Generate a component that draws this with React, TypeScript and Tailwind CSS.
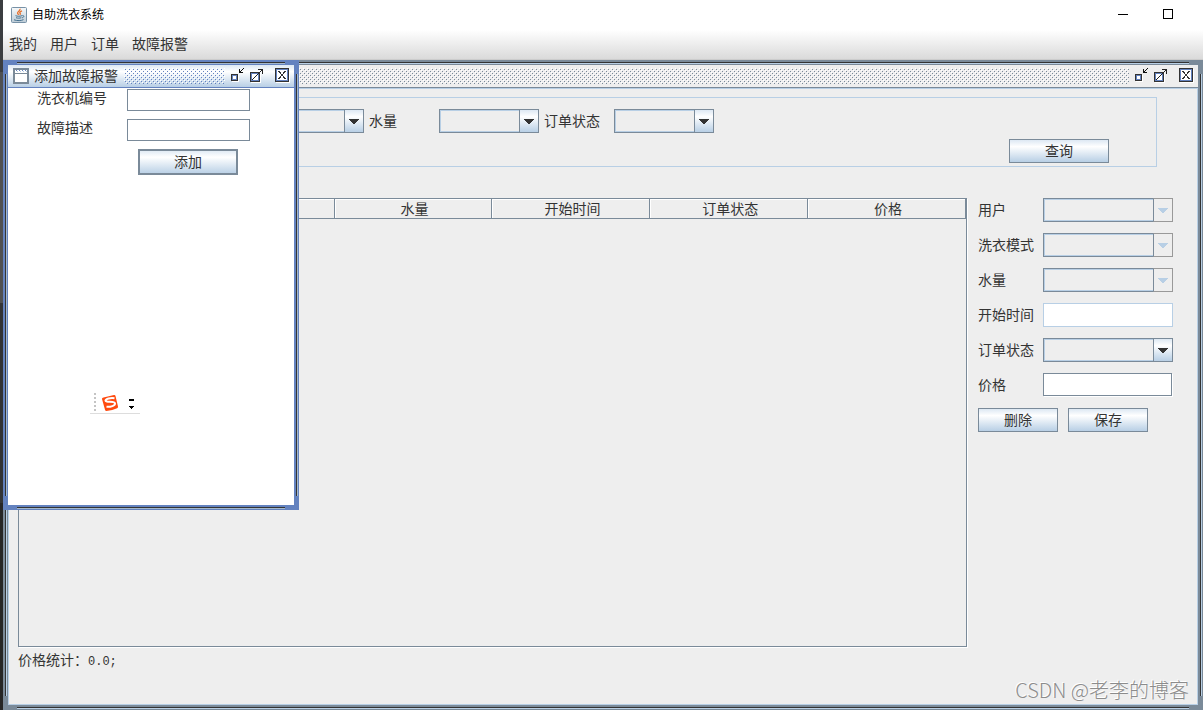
import React from 'react';

const MENUS = ['我的', '用户', '订单', '故障报警'];
const COLUMNS = ['', '', '水量', '开始时间', '订单状态', '价格'];

const BUTTON =
  'border border-[#7a8a99] bg-linear-to-b from-[#dde8f3] via-white via-30% to-[#b8cfe5] text-[14px] leading-5 text-[#333333]';

type FrameProps = {
  active?: boolean;
  title?: string;
  className: string;
  children: React.ReactNode;
};

function FrameEdge({ active, vertical }: { active?: boolean; vertical?: boolean }) {
  const tone = active ? 'bg-[#6382bf]' : 'bg-[#7a8a99]';
  const light = active ? 'bg-[#a3b8cc]' : 'bg-[#b8cfe5]';
  return vertical ? (
    <div className={`flex w-[5px] shrink-0 py-[9px] pl-[2px] ${tone}`}>
      <div className="w-px bg-[#333333]" />
      <div className={`w-px ${light}`} />
    </div>
  ) : (
    <div className={`h-[5px] shrink-0 px-[14px] pt-[2px] ${tone}`}>
      <div className="h-px bg-[#333333]" />
      <div className={`h-px ${light}`} />
    </div>
  );
}

function IconifyIcon() {
  return (
    <svg width="16" height="16" viewBox="0 0 16 16" shapeRendering="crispEdges">
      <path d="M3 13.5h6.5V7" fill="none" stroke="#fff" />
      <rect x="2" y="6" width="7" height="7" fill="#333" />
      <rect x="3" y="7" width="5" height="5" fill="#6382bf" />
      <rect x="4" y="8" width="3" height="3" fill="#333" />
      <rect x="4" y="8" width="3" height="3" fill="#fff" />
      <path d="M10 1h1v3h3v1h-4zM11 3h1v1h-1zM12 2h1v1h-1zM13 1h1v1h-1zM14 0h1v1h-1z" fill="#111" />
    </svg>
  );
}

function MaximizeIcon() {
  return (
    <svg width="16" height="16" viewBox="0 0 16 16" shapeRendering="crispEdges">
      <path d="M2 14.5h9.5V5" fill="none" stroke="#fff" />
      <rect x="1.5" y="4.5" width="9" height="9" fill="#6382bf" stroke="#333" />
      <rect x="3" y="6" width="6" height="6" fill="#fff" />
      <path d="M3 11h1v1h-1zM4 10h1v1h-1zM5 9h1v1h-1zM6 8h1v1h-1zM7 7h1v1h-1zM8 6h1v1h-1zM9 5h1v1h-1zM10 4h1v1h-1zM11 3h1v1h-1zM12 2h1v1h-1z" fill="#222" />
      <path d="M9 1h5v5h-1V2H9z" fill="#222" />
    </svg>
  );
}

function CloseIcon() {
  return (
    <svg width="16" height="16" viewBox="0 0 16 16" shapeRendering="crispEdges">
      <path d="M2 14.5h13.5V1" fill="none" stroke="#fff" />
      <rect x="1.5" y="0.5" width="13" height="13" fill="#6382bf" stroke="#333" />
      <rect x="3" y="2" width="10" height="10" fill="#fff" />
      <path
        d="M4 3h2v1H4zM10 3h2v1h-2zM5 4h2v1H5zM9 4h2v1H9zM6 5h1v1H6zM9 5h1v1H9zM7 6h2v2H7zM6 8h1v1H6zM9 8h1v1H9zM5 9h2v1H5zM9 9h2v1H9zM4 10h2v1H4zM10 10h2v1h-2z"
        fill="#333"
      />
    </svg>
  );
}

function InternalFrame({ active, title, className, children }: FrameProps) {
  return (
    <section className={`flex flex-col ${className}`}>
      <FrameEdge active={active} />
      <div className="flex flex-1">
        <FrameEdge active={active} vertical />
        <div className="flex min-w-0 flex-1 flex-col">
          <header
            className={`flex h-[23px] items-center border-b pl-[5px] ${
              active
                ? 'border-[#6382bf] bg-linear-to-b from-[#dde8f3] via-white via-30% to-[#b8cfe5]'
                : 'border-[#7a8a99] bg-[#eeeeee]'
            }`}
          >
            {title && (
              <>
                <svg width="16" height="16" viewBox="0 0 16 16" shapeRendering="crispEdges">
                  <rect x="1" y="1" width="14" height="14" fill="#fff" stroke="#7a8a99" strokeWidth="2" />
                  <path d="M2 5.5h12" stroke="#7a8a99" />
                  <path d="M3 2.5h11" stroke="#6382bf" strokeDasharray="1 2" />
                  <path d="M4 3.5h10" stroke="#b8cfe5" strokeDasharray="1 2" />
                </svg>
                <h2 className="ml-[5px] text-[14px] leading-5">{title}</h2>
              </>
            )}
            <svg className="ml-[6px] h-4 min-w-0 flex-1" shapeRendering="crispEdges">
              <defs>
                <pattern id={active ? 'bumpsOn' : 'bumpsOff'} width="4" height="4" patternUnits="userSpaceOnUse">
                  <rect x="1" y="1" width="1" height="1" fill={active ? '#6382bf' : '#7a8a99'} />
                  <rect x="3" y="3" width="1" height="1" fill={active ? '#6382bf' : '#7a8a99'} />
                  <rect width="1" height="1" fill="#fff" />
                  <rect x="2" y="2" width="1" height="1" fill="#fff" />
                </pattern>
              </defs>
              <rect width="100%" height="100%" fill={active ? 'url(#bumpsOn)' : 'url(#bumpsOff)'} />
            </svg>
            <div className="ml-1 flex shrink-0 pr-[4px]">
              <button aria-label="最小化" className="mr-[4px]">
                <IconifyIcon />
              </button>
              <button aria-label="最大化" className="mr-[9px]">
                <MaximizeIcon />
              </button>
              <button aria-label="关闭">
                <CloseIcon />
              </button>
            </div>
          </header>
          {children}
        </div>
        <FrameEdge active={active} vertical />
      </div>
      <FrameEdge active={active} />
    </section>
  );
}

function Combo({ id, label, disabled, className }: { id: string; label?: string; disabled?: boolean; className: string }) {
  return (
    <div className={`grid h-6 shrink-0 ${className}`}>
      <select
        id={id}
        aria-label={label}
        disabled={disabled}
        className="col-start-1 row-start-1 w-full appearance-none border border-[#7a8a99] bg-[#eeeeee] opacity-100 inset-ring inset-ring-[#b8cfe5]"
      />
      <span
        className={`pointer-events-none col-start-1 row-start-1 flex w-5 items-center justify-center justify-self-end border ${
          disabled
            ? 'border-[#999999] border-l-[#7a8a99] bg-[#eeeeee] text-[#b8cfe5]'
            : 'border-[#7a8a99] bg-linear-to-b from-[#dde8f3] via-white via-30% to-[#b8cfe5] text-[#333333]'
        }`}
      >
        <svg width="10" height="5" viewBox="0 0 10 5" shapeRendering="crispEdges">
          <path d="M0 0h10v1H9v1H8v1H7v1H6v1H4V4H3V3H2V2H1V1H0z" fill="currentColor" />
        </svg>
      </span>
    </div>
  );
}

function OrderFrame() {
  return (
    <InternalFrame className="min-w-0 flex-1">
      <div className="flex flex-1 flex-col border border-[#b8cfe5] pt-2 pr-2 pl-[9px]">
        <form className="mr-8 flex h-[70px] flex-col border border-[#b8cfe5] pt-[11px]">
          <div className="flex items-center pl-[245px]">
            <Combo id="mode" label="洗衣模式" className="w-[100px]" />
            <label htmlFor="water" className="ml-[5px] w-[70px]">
              水量
            </label>
            <Combo id="water" className="w-[100px]" />
            <label htmlFor="status" className="ml-[5px] w-[70px]">
              订单状态
            </label>
            <Combo id="status" className="w-[100px]" />
          </div>
          <button type="button" className={`mt-[6px] mr-[47px] h-6 w-[100px] self-end ${BUTTON}`}>
            查询
          </button>
        </form>

        <div className="mt-[31px] flex">
          <div className="h-[449px] flex-1 border border-[#7a8a99] shadow-[1px_1px_0_#ffffff]">
            <table className="w-full table-fixed border-separate border-spacing-0">
              <thead>
                <tr className="h-5">
                  {COLUMNS.map((c, i) => (
                    <th
                      key={i}
                      className="border-r border-b border-[#7a8a99] p-0 pt-[2px] pl-[3px] text-center leading-[17px] font-normal shadow-[inset_1px_1px_0_#ffffff]"
                    >
                      {c}
                    </th>
                  ))}
                </tr>
              </thead>
            </table>
          </div>

          <form className="ml-[11px] grid shrink-0 grid-cols-[65px_130px] content-start items-center gap-y-[11px] pr-4">
            <label htmlFor="editUser">用户</label>
            <Combo id="editUser" disabled className="w-full" />
            <label htmlFor="editMode">洗衣模式</label>
            <Combo id="editMode" disabled className="w-full" />
            <label htmlFor="editWater">水量</label>
            <Combo id="editWater" disabled className="w-full" />
            <label htmlFor="editStart">开始时间</label>
            <input id="editStart" disabled className="h-6 border border-[#b8cfe5] bg-white px-1" />
            <label htmlFor="editStatus">订单状态</label>
            <Combo id="editStatus" className="w-full" />
            <label htmlFor="editPrice">价格</label>
            <input
              id="editPrice"
              className="mr-px mb-px h-[23px] border border-[#7a8a99] bg-white px-1 shadow-[1px_1px_0_#ffffff]"
            />
            <div className="col-span-2 flex gap-[10px]">
              <button type="button" className={`h-6 w-20 ${BUTTON}`}>
                删除
              </button>
              <button type="button" className={`h-6 w-20 ${BUTTON}`}>
                保存
              </button>
            </div>
          </form>
        </div>

        <p className="mt-[3px]">
          价格统计：<span className="font-['Liberation_Mono',monospace] text-[12px]">0.0;</span>
        </p>
      </div>
    </InternalFrame>
  );
}

function AddFaultFrame() {
  return (
    <InternalFrame active title="添加故障报警" className="absolute top-0 left-0 h-[450px] w-[296px]">
      <form className="flex-1 bg-white pt-px pl-[29px]">
        <div className="flex">
          <label htmlFor="machine" className="w-[90px] leading-[18px]">
            洗衣机编号
          </label>
          <input id="machine" className="h-[22px] w-[123px] border border-[#7a8a99] px-1" />
        </div>
        <div className="mt-2 flex">
          <label htmlFor="desc" className="w-[90px] leading-[18px]">
            故障描述
          </label>
          <input id="desc" className="h-[22px] w-[123px] border border-[#7a8a99] px-1" />
        </div>
        <button type="button" className={`mt-2 ml-[101px] h-[26px] w-[100px] inset-ring inset-ring-[#7a8a99] ${BUTTON}`}>
          添加
        </button>
      </form>
    </InternalFrame>
  );
}

function InputMethodBar() {
  return (
    <div className="absolute top-[332px] left-[87px] flex h-[22px] w-[50px] items-center border-b border-[#dddddd] bg-white">
      <svg width="50" height="21" viewBox="0 0 50 21">
        <path d="M5 1v20" stroke="#c4c4c4" strokeWidth="2" strokeDasharray="2 2" />
        <path d="M13.5 5.4L24 3q1.2-.2 1.5 1L28 14.5q.3 1.2-.9 1.7-4.5 2.3-10.6 2.8-1.2 0-1.5-1.2L12 7q-.2-1.2 1.5-1.6z" fill="#ff4a0f" />
        <path
          d="M24.5 6.2c-4-.5-8.7.3-9 2.3-.2 2.200 9.2.4 9.5 2.8.2 2.3-4.3 3.900-8.5 3.5"
          fill="none"
          stroke="#fff"
          strokeWidth="2"
        />
        <path d="M39 7h5v2h-5zM39 14h5v1h-1v1h-1v1h-1v-1h-1v-1h-1z" fill="#000" shapeRendering="crispEdges" />
      </svg>
    </div>
  );
}

function JavaIcon() {
  return (
    <svg width="16" height="16" viewBox="0 0 16 16">
      <defs>
        <linearGradient id="javaTile" x2="0" y2="1">
          <stop stopColor="#f7f9fa" />
          <stop offset="1" stopColor="#bccbd6" />
        </linearGradient>
      </defs>
      <rect x="0.5" y="0.5" width="15" height="15" rx="1" fill="url(#javaTile)" stroke="#7791a6" />
      <path
        d="M9 1.8c.8 2-3 2.7-2.4 4.500.2.7 1 1 1.100 1.500M11 3.800c-2 .8-2.800 1.700-1.900 2.400.5.500.2 1-.3 1.400"
        fill="none"
        stroke="#e8702b"
        strokeWidth="1.3"
      />
      <path
        d="M4.500 8.700c2 .7 4.500.7 6.500 0M5 10.700c1.700.6 3.700.6 5.300 0M3 12.800c3 1.200 7.500 1 9.500-.2M11.300 8.600c2.300-.4 2 1.800-.4 2.300"
        fill="none"
        stroke="#46718f"
        strokeWidth="1"
      />
    </svg>
  );
}

export default function App() {
  return (
    <div className="flex min-h-screen bg-[#eeeeee] font-['Liberation_Sans','Noto_Sans_CJK_SC',sans-serif] text-[14px] leading-5 text-[#333333]">
      <div className="flex w-[3px] shrink-0 flex-col bg-[#262626]">
        <div className="h-[72px] bg-[#3b3d40]" />
        <div className="h-[231px] bg-[#4f5052]" />
        <div className="h-[200px] bg-[#333436]" />
      </div>
      <div className="flex min-w-0 flex-1 flex-col">
        <header className="flex h-[30px] items-center bg-white pl-2">
          <JavaIcon />
          <h1 className="ml-[5px] text-[12px] text-black">自助洗衣系统</h1>
          <button aria-label="最小化" className="ml-auto px-1">
            <svg width="10" height="10" viewBox="0 0 10 10" shapeRendering="crispEdges">
              <path d="M0 4.5h10" stroke="#000" />
            </svg>
          </button>
          <button aria-label="最大化" className="mr-[26px] ml-[27px] px-1 pb-[2px]">
            <svg width="10" height="10" viewBox="0 0 10 10" shapeRendering="crispEdges">
              <path d="M0.5 0.5h9v9h-9z" fill="none" stroke="#000" />
            </svg>
          </button>
        </header>
        <nav className="flex h-[30px] items-center gap-[13px] border-b border-[#cccccc] bg-linear-to-b from-white to-[#dadada] pb-px pl-[6px]">
          {MENUS.map((m) => (
            <button key={m}>{m}</button>
          ))}
        </nav>
        <main className="relative flex flex-1">
          <OrderFrame />
          <AddFaultFrame />
          <InputMethodBar />
          <p className="pointer-events-none absolute right-[14px] bottom-[6px] font-['Noto_Sans_CJK_SC',sans-serif] text-[20px] leading-7 font-light text-[#8c8c8c] [text-shadow:-1px_-1px_0_#ffffff]">
            CSDN @老李的博客
          </p>
        </main>
      </div>
    </div>
  );
}
